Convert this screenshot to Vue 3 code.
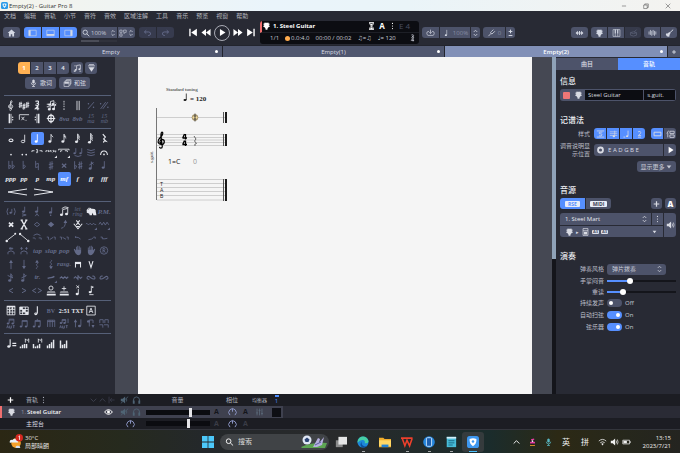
<script setup>
import { h, ref } from 'vue'

const n1 = (v) => Math.round(v * 100) / 100
const head = (x, y, rx = 1.8, ry = 1.4) =>
  `M${n1(x - rx)} ${y}a${rx} ${ry} 0 1 0 ${rx * 2} 0a${rx} ${ry} 0 1 0 ${-rx * 2} 0z`
const ring = (x, y, r) => head(x, y, r, r)
const note = (x, y, top, flags = 0) => {
  let s = `M${x + 1.4} ${y}V${top}`
  for (let i = 0; i < flags; i++) s += `M${x + 1.4} ${top + i * 1.8}q.3 1.6 2.6 3.2`
  return { s, f: head(x, y) }
}
const beam = (a, b, y, top) => ({
  s: `M${a + 1.4} ${y}V${top}H${b + 1.4}V${y}M${a + 1.4} ${top + 1}H${b + 1.4}`,
  f: head(a, y, 1.5, 1.2) + head(b, y, 1.5, 1.2),
})
const add = (base, s = '', f = '') => ({ s: (base.s || '') + s, f: (base.f || '') + f })
const corner = 'M14 10v3h-3z'
const bars = (hs) => hs.map((v, i) => `M${2 + i * 2.4} 12v${-v}h1.7v${v}z`).join('')

const icons = {
  clef: { s: 'M7 9.6C4.2 9.4 4.6 6 7.2 5.6C9.8 6 9.6 9.8 6.8 10C3.2 9.8 3.4 6.4 6.4 4.6C8.6 3 8.4.8 7.4.8C5.8 1.4 6.4 4 7.4 11.2C7.4 12.8 5.2 12.6 5.4 11.4' },
  sharps: { s: 'M2 2.5v7M3.6 2v7M.8 5l4-1M.8 7.5l4-1M6.2 4.5v7M7.8 4v7M5 7l4-1M5 9.5l4-1M10.2 2.5v7M11.8 2v7M9.2 5l4-1M9.2 7.5l4-1' },
  time: { s: 'M5.2 1.6q4-1 3.6 1T6.6 4q2.8.2 2.3 1.6T5 6M8 12V7L5 10.4h4.6', w: 1.3 },
  swing: { s: 'M2 5h3M2 8h3M6.4 5V1.8l4-1V4.6M6 11V7l5-1v4.5M12 3l1 1', f: head(5.4, 5.4) + head(9.4, 4.8) + head(5, 11) + head(10, 10.6) + head(12.2, 5.8, 1, 1) },
  dashed: { s: 'M7 1v2M7 4v1.6M7 6.8v1.6M7 9.8v2' },
  double: { s: 'M5.8 1v11M8.4 1v11' },
  simile: { s: 'M3.5 10.5l7-8', f: ring(4, 4.4, 0.9) + ring(10, 8.6, 0.9) },
  simile2: { s: 'M3 10.5l6-8M5.6 10.5l6-8', f: ring(3, 4.4, 0.9) + ring(11.6, 8.6, 0.9) },
  repStart: { s: 'M7 1v11', f: `M4.2 1h1.7v11h-1.7z${ring(9, 5, 0.8)}${ring(9, 8, 0.8)}` },
  repEnd: { s: 'M7 1v11', f: `M8.2 1h1.7v11h-1.7z${ring(5, 5, 0.8)}${ring(5, 8, 0.8)}` },
  ending: { s: 'M1.500 8V2H13M4 4.500l3.400 4M7.400 4.500l-3.400 4', f: ring(9.4, 8.6, 0.6) },
  coda: { s: `${head(7, 6.5, 3.4, 4)}M7 .8v11.4M2 6.5h10`, w: 1.4 },
  whole: { s: head(7, 8.6, 2.4, 1.6), w: 1.2 },
  half: { s: `${head(5.8, 10, 2, 1.5)}M7.8 10V2` },
  quarter: note(6, 10, 1.4),
  eighth: note(5.6, 10, 1.6, 1),
  n16: note(5.6, 10, 1.4, 2),
  n32: note(5.2, 10.4, 1, 3),
  n64: note(5.2, 11, 0.4, 4),
  rest: { s: 'M5.6 1.4l3 3.4-2 2.2 2.6 2.6q-3-.8-2.6 1.8', w: 1.4 },
  dot: { f: ring(7, 9, 1) },
  dots: { f: ring(5, 9, 1) + ring(9.6, 9, 1) },
  triplet: { s: 'M1 6V4.4h3M10 4.4h3V6M6 3q2-.4 1.8.8T6.6 5q1.8.2 1.3 1.2T6 6.6' },
  tuplet: { s: 'M1 6V4.4h2M4 6V4l1.5 1L7 4v2M8.6 4v.4M8.6 6v.4M10 6V4l2.6 2V4', f: corner },
  tupletBeam: { s: 'M.6 4V2.6H13V4M3 6V4.4h2M8 4.4h3V6', f: corner },
  tied: { s: 'M4.4 7V1.4M11.4 7V1.4M3 10q4 2.4 8 0', f: head(3, 7.4, 1.5, 1.2) + head(10, 7.4, 1.5, 1.2) },
  waves: { s: 'M2.5 3q4.5 2.5 9 0M2.5 6q4.5 2.5 9 0M2.5 9q4.5 2.5 9 0' },
  fermata: { s: 'M3 9.6C3 3 11 3 11 9.6', f: ring(7, 8.8, 1), w: 1.2 },
  flat2: { s: 'M4.4 1v9.4q3-2 2.6-3.4T4.4 7M8.4 1v9.4q3-2 2.6-3.4T8.4 7' },
  flat: { s: 'M6 1v9.4q3-2 2.6-3.4T6 7' },
  natural: { s: 'M5.4 1v8l3.2-1M8.6 12V4L5.4 5' },
  sharp: { s: 'M6 2v9.6M8.2 1.4v9.6M4.4 5.4l5.2-1.2M4.4 9l5.2-1.2' },
  dsharp: { s: 'M4.6 4.4l5 4.6M9.6 4.4l-5 4.6', w: 1.5 },
  flatsharp: { s: 'M3 1.4v9.2q2.8-2 2.4-3.4T3 7.4M8.6 2v9M10.8 1.6v9M7.2 5.4l5-1.2M7.2 8.6l5-1.2' },
  graceUp: add(note(6, 10, 2, 1), 'M5 6l5-3'),
  graceDown: note(6, 9, 1.4, 0),
  ghost: add({ s: 'M8 8V3.4', f: head(6.6, 8, 1.5, 1.2) }, 'M3.4 2.6q-2.4 4 0 8M10.8 2.6q2.4 4 0 8'),
  accent: add(note(6.4, 6.6, 0.8), 'M4.6 9.2l5 1.4-5 1.4'),
  heavy: add(note(6.4, 6.6, 0.8), 'M5 12l2-3 2 3'),
  stacc: add(note(6.4, 7.6, 1.6), '', ring(6.6, 11, 0.9)),
  slurNotes: { s: 'M5.4 10V4.2l6-1.4V9M4.4 3Q8-.4 12.4 2', f: head(4, 10.4) + head(10, 9.4) },
  handNote: { s: 'M2 5q2-4 5-2M6 4l6 1M4 5l1 4', f: 'M2 5l4-2 5 .6q2 1 1.6 3l.8 4.4H10L8.6 8 8 11H5.4l-.6-2L2 8z' },
  dead: { s: 'M4.6 4.2l5 4.8M9.6 4.2l-5 4.8', w: 2 },
  bigX: { s: 'M4 1.4l6 10.2M10 1.4L4 11.6M3 1.4h2.6M3 11.6h2.6M8.4 1.4H11M8.4 11.6H11', w: 1.5 },
  diamond: { s: 'M7 4l3.2 2.5L7 9 3.8 6.5z' },
  diamondF: { f: 'M7 3.2l3.8 3.3L7 9.8 3.2 6.5z' },
  bend: { s: 'M3.6 11q5.4-1 5-8', f: 'M6.4 4.6L8.8 1l2 3.8z' },
  whammy: { s: 'M2 5.6l5 6 5-6M5 1.6l4 5.4M9 1.6L5 7M5.4 9h3', w: 1.2 },
  vib: { s: 'M1 6q1-2 2 0t2 0 2 0 2 0 2 0 2 0', f: corner },
  vibWide: { s: 'M1 6.4l1.6-2.6 2 3.4 2-3.4 2 3.4 2-3.4 2 3', f: corner },
  slideUp: { s: 'M3 9.4L11.4 3', f: ring(2, 10.6, 1.5) + ring(12, 2, 1.2) },
  slideDown: { s: 'M3 3l8.4 7', f: ring(2.4, 2.4, 1.4) + ring(12, 10.6, 1.5) },
  hammer: { s: 'M3 4q4-3.4 8 0M2 7h2q1 0 1 1.6M9 7h3v2' },
  sl1: { s: 'M2 6h2v3M5.4 9l4-2.6M10 6h2v3' },
  sl2: { s: 'M2 6h2v3M5.4 6.4l4 2.2M10 6h2v3' },
  sl3: { s: 'M4 6q4 0 6 2.4M4 5v2' },
  sl4: { s: 'M4 9q4 0 6-2.4M10 6h2v2' },
  sl5: { s: 'M3 6h2v2q3 .4 6-.6' },
  arcTr: { s: 'M3.4 11V8.4q3.6-3 7.2 0V11M4.6 4h5M6 2.4v3.4M8 3v2.6' },
  arcTrP: { s: 'M3.4 11V8.4q3.6-3 7.2 0V11M2.6 4h3M8.4 4h3M4 2.4v3.4M10 2.4v3.4' },
  palm: { f: 'M3 7.6L2 5l1-.5L4.6 6.6V2h1v3.6h.6V.9h1.1v4.7H8V1.4h1v4.4h.7V3h1v6q-.3 3-3.2 3Q5 12 3 7.6z' },
  palm2: { f: 'M11 7.6L12 5l-1-.5L9.4 6.6V2h-1v3.6h-.6V.9H6.7v4.7H6V1.4H5v4.4h-.7V3h-1v6q.3 3 3.2 3Q9 12 11 7.6z' },
  regd: { s: `${ring(7, 6.5, 4.4)}M5.8 9V4h1.6q1.4 1.2 0 2.6H5.8M7 6.6L8.6 9` },
  up: { s: 'M7 12V2.4', f: 'M4.8 4.6L7 .8l2.2 3.8z' },
  down: { s: 'M7 1v9.6', f: 'M4.8 8.4L7 12.2l2.2-3.8z' },
  upW: { s: 'M7 12q-1.6-1 0-2t0-2 0-2 0-2', f: 'M4.8 4.4L7 .8l2.2 3.6z' },
  downW: { s: 'M7 1q1.6 1 0 2t0 2 0 2 0 2', f: 'M4.8 8.6L7 12.2l2.2-3.6z' },
  pickDown: { s: 'M4 10V5h6v5', f: 'M3.4 3.4h7.2v2.6H3.4z', w: 1.2 },
  pickUp: { s: 'M4.6 2.6L7 10l2.4-7.4', w: 1.3 },
  gr1: add(note(5.4, 10, 2, 2), 'M3 4l6 3'),
  gr2: add(note(5.4, 10, 2, 1), 'M4 7l6-3'),
  turnA: { s: 'M3 7.6q2-1 4-1t4-1.4', f: corner, w: 1.6 },
  mord: { s: 'M2 7.6l2-2 2 2 2-2 2 2 2-2', w: 1.3 },
  mordP: { s: 'M2 7.6l2-2 2 2 2-2 2 2 2-2M7 3.4v6.4', w: 1.2 },
  turn: { s: 'M5 8.4C1 9.6 2 4 4.6 5.4S9 9 11 8.2 10.6 4 8.6 5', w: 1.2 },
  turn2: { s: 'M9 8.4C13 9.6 12 4 9.4 5.4S5 9 3 8.2 3.4 4 5.4 5', w: 1.2 },
  lt: { s: 'M9.4 4L4.6 6.6l4.8 2.6', w: 1.1 },
  gt: { s: 'M4.6 4l4.8 2.6-4.8 2.6', w: 1.1 },
  ltgt: { s: 'M6 4L1.6 6.6 6 9.2M8 4l4.4 2.6L8 9.2', w: 1.1 },
  wahO: { s: ring(7, 3.6, 2.4), f: 'M3 7.8h8.4l1 1.2H2zM2 10.4h10.6v2H2z' },
  wahP: { s: 'M4.4 4.2h5.2M7 1.6v5', f: 'M3 7.8h8.4l1 1.2H2zM2 10.4h10.6v2H2z' },
  noteX: add(note(6, 10.6, 4.6), 'M5 .6l3.4 3M8.4.6L5 3.6'),
  noteDot: add(note(6, 8.4, 1), 'M5 11.4h5', ring(9, 2.4, 1)),
  chordGrid: { s: 'M2.4 2h9.2v9.6H2.4zM5.4 2v9.6M8.6 2v9.6M2.4 5.2h9.2M2.4 8.4h9.2', f: 'M2 1h10v1.8H2z' + ring(5.4, 6.8, 1) + ring(8.6, 4, 1) },
  grid: { s: 'M2 2.4h10v8.8H2zM5.3 2.4v8.8M8.6 2.4v8.8M2 5.4h10M2 8.4h10', f: 'M2 2.4h3v3H2zM9 8.4h3v3H9zM5.4 5.4h3v3h-3z' },
  slash: { s: `${head(5.6, 10.4, 1.2, 1)}M7.4 10V1.6`, w: 1.3 },
  boxA: { s: 'M2 1.4h10v10.4H2zM4.8 9.4L7 3.6l2.2 5.8M5.6 7.6h2.8' },
  autoBeam: add(beam(3.4, 9, 6.4, 1.4), 'M2 12l1-3 1 3M5.4 9v3h2V9M9 9h2.4M10.2 9v3'),
  beamA: beam(3.4, 9.4, 10, 3),
  beamB: add(beam(3.4, 9.4, 10, 3), 'M7.4 1v2'),
  beamC: { s: 'M3 10.6V2.6h8.4v8M5.8 2.6v8M8.6 2.6v8M3 4.2h8.4' },
  autoStem: add(beam(3.4, 7.6, 6, 1.8), 'M11.8 6V.8M2 12l1-3 1 3M5.4 9v3h2V9M9 9h2.4M10.2 9v3'),
  stemUp: { s: 'M4 11V4M10.4 9V1.6', f: 'M2 5l2-3.6L6 5z' + head(8.8, 9.4) },
  stemDn: { s: 'M5 10V2.4h4.4V6', f: head(4, 4) + 'M7.6 8.4l1.8 3.4 1.8-3.4z' },
  brackets: { s: 'M2 6V2h4v4M8 6V2h4v4M1.6 8h4v3.4M7 8h5v3.4' },
  tempo: { s: 'M6 10V1.6M8.6 6.4h4.6M8.6 9h4.6', f: head(4.4, 10), w: 1.3 },
  volM: { s: 'M8.6 5.4V1l2 2 2-2v4.4', f: bars([2, 4, 5, 5]) },
  panM: { s: 'M8.6 5.4V1l2 2 2-2v4.4', f: bars([5, 2, 3, 5]) },
  vol: { f: bars([3, 5, 7, 10]) },
  pan: { f: bars([9, 4, 5, 9]) },
  home: { f: 'M7 .8L.8 6.6h2v5.6h3V8.4h2.4v3.8h3V6.6h2z' },
  layL: { s: 'M1 2h12v9H1z', f: 'M1 2h3v9H1z' },
  layB: { s: 'M1 2h12v9H1z', f: 'M1 8h12v3H1z' },
  layR: { s: 'M1 2h12v9H1z', f: 'M10 2h3v9h-3z' },
  search: { s: `${ring(5.6, 5.2, 3.8)}M8.4 8l4.4 4.2`, w: 1.5 },
  pages: { s: 'M1.4 1.4h4v4h-4zM8 1.4h4.6v4H8zM1.4 8h4v4h-4zM8 7.4h2' },
  updown: { s: 'M4.2 4.8L7 2l2.8 2.8M4.2 8.2L7 11l2.8-2.8', w: 1.3 },
  undo: { s: 'M5 2L2 4.8 5 7.6M2 4.8h7q3.4.4 3 3.2T8 10.6', w: 1.5 },
  redo: { s: 'M9 2l3 2.8-3 2.8M12 4.8H5Q1.6 5.2 2 8t4 2.6', w: 1.5 },
  first: { f: 'M1.6 1h2v11h-2zM12.6 1v11L4.4 6.5z' },
  last: { f: 'M10.4 1h2v11h-2zM1.4 1v11l8.2-5.5z' },
  rew: { f: 'M7 1.6v9.8L.4 6.5zM13.6 1.6v9.8L7 6.5z' },
  fwd: { f: 'M7 1.6v9.8l6.6-4.9zM.4 1.6v9.8L7 6.5z' },
  play: { f: 'M4 1.4v10.2l8-5.1z' },
  guitar: { f: 'M4 .8q3 1 6 0l.6 1.6 1.6.4v1.4l-1.4.4v1.2l1.4.4v1.4l-1.4.4L9 9.6 8.4 12.6H5.6L5 9.6 3.2 8l-1.4-.4V6.2l1.4-.4V4.6l-1.4-.4V2.8l1.6-.4z' },
  metro: { s: 'M3 1h8M3 12h8M4 1.6q0 3 3 5-3 2-3 5M10 1.6q0 3-3 5 3 2 3 5', w: 1.5, f: 'M4.6 3h4.8L7 6zM4.6 11.4h4.8L7 8z' },
  kebab: { f: ring(7, 2.4, 1) + ring(7, 6.5, 1) + ring(7, 10.6, 1) },
  loop: { s: 'M4.6 4H3Q1 4.4 1 7t2 3.4h8Q13 10 13 7t-2-3h-1.6M7 1v6M5 5.2L7 7.4l2-2.2', w: 1.1 },
  fork: { s: 'M2 11.6L6 7.4M6 7.4Q4.6 5.6 7 4l3-3M6 7.4Q7.8 9 9.6 6.6l3-3', w: 1.3 },
  plusminus: { s: 'M4 4h6M7 1v6M4 10.6h6', w: 1.6 },
  tuner: { f: 'M.6 6.5L4.4 3v7zM13.4 6.5L9.6 3v7zM4.4 5.6h5.2v1.8H4.4zM6.2 3.4h1.6v6.2H6.2z' },
  piano: { s: 'M1.4 1h11.2v11H1.4zM5 7v5M9 7v5', f: 'M4 1h2v6.4H4zM8 1h2v6.4H8z' },
  drum: { s: 'M2 6v4q5 3 10 0V6M2 6q5 3 10 0M2 6q5-3 10 0M8 5l4-4', w: 1.2 },
  wave: { s: 'M1.4 4v5M3.6 1.5v8M5.8 3v8M8 1.5v8M10.2 3v8M12.4 4v5', w: 1.2 },
  strat: { s: 'M6 7.6L13 1', f: 'M1 9q1-3 3-1.6L6.6 5l2 2-1.6 2.6q1 3-2 3T1 9z', w: 1.6 },
  mic: { s: 'M3.4 6q0 3.6 3.6 3.6T10.6 6M7 9.6V12M4.6 12.2h4.8', f: 'M5 2.4q2-2.8 4 0V6Q7 9 5 6z', w: 1.2 },
  cards: { s: 'M1.4 4.6h8v7.6h-8zM3.4 4.6V2.6h8v7.6h-2M5.4 2.6V1h7.2v7h-1.2', f: 'M2 5h7v2.6H2z' },
  swap: { s: 'M5.6 9V2.4l6-1V8M2 3h2M10 11.6h3', f: head(4.2, 9.4) + head(10.2, 8.4) + 'M1 10.6h3v2H1z', w: 1.3 },
  drop: { s: 'M1.4 3h11.2M3 1h8', f: 'M2 5.4h10L7 12.4z', w: 1.3 },
  plus: { s: 'M7 2v9M2.5 6.5h9', w: 2 },
  target: { s: ring(7, 6.5, 4), w: 3 },
  caret: { f: 'M3 4h8L7 9z' },
  speaker: { s: 'M9.6 4q1.4 2.5 0 5M11.6 2.4q2.4 4 0 8.2', f: 'M1 4.6h3L8 1v11L4 8.4H1z', w: 1.2 },
  amp: { s: 'M3 1h8v11H3zM3 4.4h8', f: 'M4.4 6h5.2v4.6H4.4z', w: 1.2 },
  eye: { s: 'M.6 6.5Q7-1 13.4 6.5 7 14 .6 6.5z', f: ring(7, 6.5, 2.4), w: 1.6 },
  mute: { s: 'M10 4q1.4 2.5 0 5M1 12L13 1', f: 'M1 4.6h3L8 1v11L4 8.4H1z', w: 1.2 },
  phones: { s: 'M2 9V6.5q.4-5 5-5t5 5V9', f: 'M1 7.4h3v5H1zM10 7.4h3v5h-3z', w: 1.4 },
  knob: { s: 'M3 11.6A6 6 0 1 1 11 11.6M7 1v5', w: 1.6 },
  eq: { s: 'M3 1v11M7 1v11M11 1v11M1.6 8h3M5.6 4h3M9.6 9h3', w: 1.3 },
  chevD: { s: 'M2.4 4.4L7 9l4.6-4.6', w: 1.6 },
  chevU: { s: 'M2.4 9L7 4.4 11.6 9', w: 1.6 },
  mixIn: { s: 'M3 1v11M5 6.5h7M7.4 3.5L5 6.5l2.4 3', w: 1.3 },
  std: { s: 'M1 1.5h12M1 11.5h12M10 3.500H5V6q5-.5 4.500 2T4.500 9.500', w: 1.2 },
  stdNote: { s: 'M1 3h12M1 6h12M1 9h12M9 9V1', f: head(7.6, 10, 2, 1.6), w: 1 },
  slashNote: { s: 'M9.500 1v9M2 11.500h3', w: 1.3, f: head(8, 10, 1.8, 1.4) },
  jianpu: { s: 'M4.6 3q4.6-2 4.4 1T5 9h4.6M4.6 11.6h5', w: 1.2 },
  rect: { s: 'M1.4 3.6h11.2v5.8H1.4z', w: 1.5 },
  stack: { s: 'M4 1L1 5.6M2.6 4.6V12M6 2h7v3.6H6zM6 8h7v4H6z', w: 1.3 },
  wifi: { s: 'M1 5q6-5.4 12 0M3.4 7.6q3.6-3 7.2 0', f: 'M5 9.4q2-1.4 4 0L7 12z', w: 1.3 },
  battery: { s: 'M1 3.6h11v6H1zM13.4 5.4v2.4', f: 'M2 4.6h5.6v4H2z', w: 1.2 },
  minus: { s: 'M2.5 6.5h9' },
  restore: { s: 'M2 4.4h7.6V12H2zM4.4 4.4V2H12v7.6H9.6' },
  close: { s: 'M2 1.5l10 10M12 1.5l-10 10' },
}

const Glyph = (p) => {
  const i = icons[p.n]
  return h('svg', { viewBox: '0 0 14 13', 'aria-hidden': 'true' }, [
    i.s ? h('path', { d: i.s, fill: 'none', stroke: 'currentColor', 'stroke-width': i.w || 1 }) : null,
    i.f ? h('path', { d: i.f, fill: 'currentColor' }) : null,
  ])
}
Glyph.props = ['n']

/* "*" marks an available symbol, "#" the selected one, "=" a lettered one */
const parse = (rows) =>
  rows.flatMap((r) => r.split(' ')).map((k) => {
    const on = /^[*#]/.test(k)
    const sel = k[0] === '#'
    const key = k.replace(/^[*#]/, '')
    const text = key[0] === '='
    return { on, sel, text, key: text ? key.slice(1).replace('_', '\n') : key }
  })
const palettes = [
  { id: 'bars', cells: parse(['*clef *sharps *time *swing *dashed *double simile simile2', '*repStart *ending *repEnd *coda =8va =8vb =15_ma =15_mb']) },
  { id: 'notes', cells: parse([
    '*whole *half #quarter *eighth *n16 *n32 *n64 *rest',
    '*dot *dots *triplet *tuplet *tupletBeam tied waves *fermata',
    'flat2 flat natural sharp dsharp flatsharp graceUp graceDown',
    '*=ppp *=pp *=p *=mp #=mf *=f *=ff *=fff']), hairpins: true },
  { id: 'effects', cells: parse([
    'ghost accent heavy stacc *slurNotes =let_ring *handNote =P.M.',
    '*dead *bigX diamond diamondF bend *whammy vib vibWide',
    '*slideUp *slideDown hammer sl1 sl2 sl3 sl4 sl5',
    'arcTr arcTrP =tap =slap =pop palm palm2 regd',
    'up down upW downW =rasg. *pickDown *pickUp =',
    'gr1 gr2 =tr. turnA mord mordP turn turn2',
    'lt gt ltgt *wahO *wahP *noteX *noteDot =']) },
  { id: 'marks', cells: parse(['*chordGrid *grid *slash =BV *=2:51 *=TXT *boxA =', 'autoBeam beamA beamB beamC autoStem stemUp stemDn brackets']) },
  { id: 'autom', cells: parse(['*tempo *volM *panM *vol *pan']) },
]

const menus = ['文档', '编辑', '音轨', '小节', '音符', '音效', '区域注解', '工具', '音乐', '预览', '视窗', '帮助']
const docs = ['Empty', 'Empty(1)', 'Empty(2)']
const palm = ref(32)
const stress = ref(21)
const toggles = ref([
  { label: '持续发声', on: false },
  { label: '自动扫弦', on: true },
  { label: '弦乐器', on: true },
])
const trackVol = ref(72)
const masterVol = ref(68)
const title = ref('Steel Guitar')
const short = ref('s.guit.')
</script>

<template>
  <div class="window">
    <header class="titlebar">
      <svg class="logo" viewBox="0 0 14 14"><rect width="14" height="14" rx="3" fill="#2b9be8" /><path d="M3 3.500q4-1.500 8 0Q11.500 9 7 12 2.500 9 3 3.500z" fill="#fff" /><circle cx="7" cy="6.500" r="1.800" fill="#2b9be8" /></svg>
      <span>Empty(2) - Guitar Pro 8</span>
      <div class="wincontrols">
        <button aria-label="Minimize"><Glyph n="minus" /></button>
        <button aria-label="Restore"><Glyph n="restore" /></button>
        <button aria-label="Close"><Glyph n="close" /></button>
      </div>
    </header>

    <nav class="menubar"><a v-for="m in menus" :key="m" href="#">{{ m }}</a></nav>

    <div class="toolbar">
      <div class="left-tools">
        <button class="tool" aria-label="Home"><Glyph n="home" /></button>
        <div class="group blue">
          <button aria-label="Palette"><Glyph n="layL" /></button>
          <button aria-label="Mixer"><Glyph n="layB" /></button>
          <button aria-label="Inspector"><Glyph n="layR" /></button>
        </div>
        <div class="zoomwrap">
          <div class="group">
            <label class="zoom"><Glyph n="search" /><select aria-label="Zoom"><option>100%</option></select><Glyph n="updown" /></label>
            <button class="pages" aria-label="Layout"><Glyph n="pages" /><Glyph n="updown" /></button>
          </div>
          <div class="scroll"><i></i></div>
        </div>
        <div class="group off">
          <button aria-label="Undo"><Glyph n="undo" /></button>
          <button aria-label="Redo"><Glyph n="redo" /></button>
        </div>
      </div>
      <div class="transport">
        <button aria-label="First"><Glyph n="first" /></button>
        <button aria-label="Rewind"><Glyph n="rew" /></button>
        <button class="play" aria-label="Play"><Glyph n="play" /></button>
        <button aria-label="Forward"><Glyph n="fwd" /></button>
        <button aria-label="Last"><Glyph n="last" /></button>
      </div>
      <section class="lcd">
        <div class="lcd-top">
          <Glyph n="guitar" /><strong>1. Steel Guitar</strong>
          <Glyph class="push" n="metro" /><b class="bigA">A</b><Glyph n="kebab" /><span class="chord">E 4</span>
        </div>
        <div class="lcd-bottom">
          <span>1/1</span>
          <span class="beat"><i></i>0.0:4.0</span>
          <span class="clock">00:00 / 00:02</span>
          <span class="sym">♫=♫</span>
          <span class="bpm">♩= 120</span>
          <Glyph n="time" />
        </div>
      </section>
      <div class="mid-tools">
        <div class="group">
          <button aria-label="Loop"><Glyph n="loop" /></button>
          <button class="speed"><Glyph n="quarter" /><span>100%</span></button>
          <button class="narrow" aria-label="Speed step"><Glyph n="updown" /></button>
        </div>
        <div class="group">
          <button class="tune"><Glyph n="fork" /><span>0</span></button>
          <button class="narrow" aria-label="Tone step"><Glyph n="plusminus" /></button>
        </div>
      </div>
      <div class="right-tools">
        <button class="tool" aria-label="Tuner"><Glyph n="tuner" /></button>
        <div class="group">
          <button aria-label="Fretboard"><Glyph n="guitar" /></button>
          <button aria-label="Keyboard"><Glyph n="piano" /></button>
          <button class="disabled" aria-label="Drums"><Glyph n="drum" /></button>
        </div>
        <div class="group">
          <button aria-label="Virtual"><Glyph n="wave" /></button>
          <button aria-label="Line in"><Glyph n="strat" /></button>
        </div>
      </div>
    </div>

    <nav class="doctabs">
      <button v-for="(d, i) in docs" :key="d" :class="{ active: i === 2 }"><span>{{ d }}</span><i></i></button>
      <button class="add" aria-label="New"><Glyph n="plus" /></button>
    </nav>

    <main class="work">
      <aside class="palette">
        <div class="voices">
          <div class="group voice"><button v-for="v in 4" :key="v" :class="{ current: v === 1 }">{{ v }}</button></div>
          <button class="tool" aria-label="Multivoice"><Glyph n="swap" /></button>
          <button class="tool" aria-label="Design"><Glyph n="drop" /></button>
        </div>
        <div class="words">
          <button class="tool"><Glyph n="mic" />歌词</button>
          <button class="tool"><Glyph n="cards" />和弦</button>
        </div>
        <section v-for="p in palettes" :key="p.id" :class="['symbols', p.id]">
          <button v-for="(c, i) in p.cells" :key="i" :class="{ on: c.on, sel: c.sel, stacked: c.key.includes('\n') }" :aria-label="c.key">
            <span v-if="c.text">{{ c.key }}</span><Glyph v-else :n="c.key" />
          </button>
          <template v-if="p.hairpins">
            <button class="on hair" aria-label="Crescendo"><svg viewBox="0 0 20 8"><path d="M20 1L1 4l19 3" /></svg></button>
            <button class="on hair" aria-label="Decrescendo"><svg viewBox="0 0 20 8"><path d="M0 1l19 3L0 7" /></svg></button>
          </template>
        </section>
      </aside>

      <div class="canvas">
        <article class="sheet">
          <svg class="score" viewBox="0 0 110 130" aria-label="Score">
            <g class="serif" fill="#222">
              <text x="28" y="9" font-size="5">Standard tuning</text>
              <text x="52" y="19" font-size="7" font-weight="bold">= 120</text>
              <text x="0" y="0" font-size="5" transform="translate(15 81) rotate(-90)">s.guit.</text>
            </g>
            <path d="M48.300 18v-6.500" stroke="#222" stroke-width=".8" /><ellipse cx="47" cy="18" rx="1.500" ry="1.100" fill="#111" />
            <g fill="none" stroke="#c4c4c4" stroke-width=".8">
              <path d="M19 35.500h69M19 52.500h69M19 55.500h69M19 58h69M19 60.500h69M19 63.500h69" />
              <path d="M19 97.500h69M19 101.500h69M19 105.500h69M19 109.500h69M19 113.500h69M19 118h69" />
            </g>
            <path d="M18.500 26v92" stroke="#555" stroke-width=".8" />
            <path d="M85.500 30v11M85.500 52v12M85.500 97v22" stroke="#444" stroke-width=".9" />
            <path d="M88 30v11M88 52v12M88 97v22" stroke="#050505" stroke-width="1.800" />
            <circle cx="57" cy="35.500" r="2.900" fill="#f6dfa0" stroke="#94825a" stroke-width=".8" /><path d="M57 31.500v8M55.500 34h3M55.500 37h3" stroke="#333" stroke-width=".8" />
            <path d="M24 61.500c-3-.5-2.500-4 .3-4.200 3 .5 2.500 5.200-.8 5.200-4.500-.3-4.200-4.500-1-7.300 2.700-2.200 2.700-5.200 1.500-5.200-1.800.8-1.200 4 .3 14.500 0 2.200-3 2-2.700.3" fill="none" stroke="#000" stroke-width="1.200" />
            <path d="M47.500 52v5.500M44.500 56h4.500M46.500 52L44.700 56M47.500 58.500v5.500M44.500 62.500h4.500M46.500 58.500l-1.800 4" fill="none" stroke="#000" stroke-width="1.300" />
            <path d="M56 54l2 3-1.500 2 2 2.500q-2.500 0-1.500 2.500" fill="none" stroke="#666" stroke-width="1" />
            <g class="sans">
              <text x="30" y="82" font-size="7" fill="#222">1=C</text><text x="55" y="82" font-size="7" fill="#999">0</text>
            </g>
            <g class="tab" fill="#222" font-size="5">
              <text x="22" y="104">T</text><text x="22" y="110">A</text><text x="22" y="116">B</text>
            </g>
          </svg>
        </article>
      </div>

      <div class="vscroll"><i></i></div>

      <aside class="inspector">
        <div class="insp-tabs"><button>曲目</button><button class="active">音轨</button></div>
        <h2>信息</h2>
        <div class="info">
          <button aria-label="Colour"><i class="swatch"></i></button>
          <button aria-label="Instrument"><Glyph n="guitar" /></button>
          <input v-model="title" aria-label="Track name" /><input v-model="short" aria-label="Short name" />
        </div>
        <h2 class="second">记谱法</h2>
        <div class="field"><span class="lbl">样式</span>
          <div class="group blue"><button v-for="g in ['std', 'stdNote', 'slashNote', 'jianpu']" :key="g" :aria-label="g"><Glyph :n="g" /></button></div>
          <div class="group staffkind"><button class="active" aria-label="Single"><Glyph n="rect" /></button><button aria-label="Multi"><Glyph n="stack" /></button></div>
        </div>
        <div class="field tuning"><span class="lbl">调音说明显示位置</span>
          <div class="group"><button class="strings"><Glyph n="target" />E A D G B E</button><button class="go" aria-label="Listen"><Glyph n="play" /></button></div>
        </div>
        <button class="tool more">显示更多<Glyph n="caret" /></button>
        <h2 class="sound">音源</h2>
        <div class="source">
          <div class="group"><button class="active"><b>RSE</b></button><button><b class="midi">MIDI</b></button></div>
          <button class="tool" aria-label="Add sound"><Glyph n="plus" /></button>
          <button class="tool auto">A</button>
        </div>
        <div class="bank">
          <div class="bank-name"><select aria-label="Sound"><option>1. Steel Mart</option></select><Glyph n="updown" /><button aria-label="Sound menu"><Glyph n="kebab" /></button></div>
          <button class="bank-listen" aria-label="Preview sound"><Glyph n="speaker" /></button>
          <div class="bank-chain"><Glyph n="guitar" /><em>▸</em><Glyph n="amp" /><b>A3</b><b>A3</b><Glyph class="last" n="caret" /></div>
        </div>
        <h2 class="perf">演奏</h2>
        <div class="prow"><label for="style">弹奏风格</label><span class="pick"><select id="style"><option>弹片拨奏</option></select><Glyph n="updown" /></span></div>
        <div class="prow slim"><label for="palm">手掌闷音</label><input id="palm" v-model="palm" class="range" type="range" :style="{ '--v': palm + '%' }" /></div>
        <div class="prow slim"><label for="stress">重读</label><input id="stress" v-model="stress" class="range" type="range" :style="{ '--v': stress + '%' }" /></div>
        <div v-for="(t, i) in toggles" :key="i" class="prow"><label :for="'t' + i">{{ t.label }}</label><input :id="'t' + i" v-model="t.on" class="switch" type="checkbox" /><span>{{ t.on ? 'On' : 'Off' }}</span></div>
      </aside>
    </main>

    <section class="mixer">
      <div class="mrow mhead">
        <button aria-label="Add track"><Glyph n="plus" /></button>
        <span class="mname">音轨<Glyph n="kebab" /><span class="fold"><Glyph n="chevD" /><Glyph n="chevU" /><Glyph n="mixIn" /></span></span>
        <span class="ms"><Glyph n="mute" /><Glyph n="phones" /></span>
        <span>音量</span><span></span><span class="pan">相位</span><span></span><span class="eqh">均衡器</span>
        <span class="marker">1</span>
      </div>
      <div class="mrow track">
        <Glyph n="guitar" />
        <span class="mname"><span class="num">1.</span> Steel Guitar<Glyph class="eye" n="eye" /></span>
        <span class="ms"><Glyph n="mute" /><Glyph n="phones" /></span>
        <input v-model="trackVol" class="fader" type="range" aria-label="Track volume" />
        <b>A</b><Glyph class="knob" n="knob" /><b>A</b><Glyph class="eq" n="eq" /><span class="block"></span><span class="timeline"></span>
      </div>
      <div class="mrow master">
        <span></span><span class="mname">主控台</span><span class="ms"><Glyph class="knob" n="knob" /></span>
        <input v-model="masterVol" class="fader" type="range" aria-label="Master volume" />
        <b>A</b><Glyph class="knob" n="knob" /><b>A</b>
      </div>
    </section>

    <footer class="taskbar">
      <div class="weather">
        <svg viewBox="0 0 28 28"><circle cx="15" cy="17" r="9" fill="#f5a02c" /><path d="M3 15q0-5 6-4 3-4 7 0 4 1 3 5H6q-3 1-3-1z" fill="#e9f1fb" /><path d="M14 25q0-4 5-3 4 0 4 4H16z" fill="#cfe0f5" /><circle cx="21" cy="7" r="7" fill="#d4281f" /><path d="M19.500 5l2-1.500V11" fill="none" stroke="#fff" stroke-width="1.400" /></svg>
        <span>30°C<br />局部晴朗</span>
      </div>
      <div class="apps">
        <button class="start" aria-label="Start"><svg viewBox="0 0 12 12"><path d="M0 0h5.600v5.600H0zM6.400 0H12v5.600H6.400zM0 6.400h5.600V12H0zM6.400 6.400H12V12H6.400z" fill="#4cc8fa" /></svg></button>
        <label class="find"><Glyph n="search" /><input placeholder="搜索" aria-label="搜索" />
          <svg class="art" viewBox="0 0 28 14"><path d="M1 12q12-5 26-4l-2 5H2z" fill="#5da552" /><circle cx="7" cy="5" r="4.500" fill="#dfe6f4" /><path d="M7 2.500l2.500 2-1 2.500h-3l-1-2.500z" fill="#2c4474" /><path d="M13 12l5-9 2 1-1 4 5-6-2 8-5 2z" fill="#b6b0e0" /><path d="M15 10l6-3" stroke="#5c5aa0" /></svg>
        </label>
        <button aria-label="Task view"><svg viewBox="0 0 14 14"><path d="M1 5h8v8H1z" fill="#8b8b8b" /><path d="M4 1h10v9H4z" fill="#e6e6e6" /></svg></button>
        <button class="run" aria-label="Edge"><svg viewBox="0 0 14 14"><circle cx="7" cy="7" r="6.500" fill="#1c87d8" /><path d="M.7 6Q2 .5 7 .5t6.500 5.500Q13 9 9 8.500q1-3.500-2.500-3.700T.7 8z" fill="#46cfa5" /><path d="M5.500 6.500q-1 4 3 5.500 2 .5 4-.8-2 2.500-5.500 2.300Q2 12 5.500 6.500z" fill="#0c4f9e" /></svg></button>
        <button aria-label="Files"><svg viewBox="0 0 14 14"><path d="M0 2h5l1.500 1.500H14V13H0z" fill="#f0ad2c" /><path d="M0 5h14v7H0z" fill="#ffd766" /><path d="M3 10h8v3H3z" fill="#2684d4" /></svg></button>
        <button class="run" aria-label="WPS"><svg viewBox="0 0 14 14"><path d="M0 2.500h13.500M1.500 3l3 8.500L7 5l3 6.500 3-8.500" fill="none" stroke="#ed402c" stroke-width="1.800" /></svg></button>
        <button class="run" aria-label="Phone"><svg viewBox="0 0 14 14"><circle cx="7" cy="7" r="6.800" fill="#2586dd" /><rect x="4" y="2" width="6" height="10" rx="1.300" fill="#1d5fae" stroke="#cfe9ff" /></svg></button>
        <button class="run" aria-label="Notepad"><svg viewBox="0 0 14 14"><path d="M2 1h11v12H2z" fill="#48bcd8" /><path d="M2 1h11v2H2z" fill="#d4eef7" /><path d="M4 5.500h7M4 8h7M4 10.500h5" stroke="#14627f" /></svg></button>
        <button class="run current" aria-label="Guitar Pro"><svg viewBox="0 0 14 14"><rect width="14" height="14" rx="3" fill="#3d97ef" /><path d="M3 3.500q4-1.500 8 0Q11.500 9 7 12 2.500 9 3 3.500z" fill="#fff" /><circle cx="7" cy="6.500" r="1.500" fill="#3d97ef" /></svg></button>
      </div>
      <div class="tray">
        <Glyph n="chevU" />
        <svg viewBox="0 0 14 13"><ellipse cx="7" cy="7" rx="3.500" ry="5.500" fill="#111" /><path d="M4.500 2l5-1 .5 2-5 1zM3 6h8v3H3z" fill="#e83fa5" /><circle cx="7" cy="5" r="1.500" fill="#fff" /><path d="M3 12h8" stroke="#f2a52d" stroke-width="1.500" /></svg>
        <Glyph class="micro" n="mic" />
        <span>英</span><span>拼</span>
        <div class="status"><Glyph n="wifi" /><Glyph n="speaker" /><Glyph n="battery" /></div>
        <time>13:15<br />2023/7/21</time>
      </div>
    </footer>
  </div>
</template>

<style>
body { margin: 0; background: #24262f; }
</style>

<style scoped>
* { box-sizing: border-box; }
.window { display: grid; grid-template-rows: 11px 9px 25px 12px 1fr 35px 24px; height: 100vh; overflow: hidden; background: #282a34; color: #d9dbe3; font: 6px/8px "Open Sans", "Noto Sans CJK SC", sans-serif; }
button, input, select { margin: 0; padding: 0; border: 0; background: none; color: inherit; font: inherit; outline: 0; min-width: 0; }
select { appearance: none; }
a { color: inherit; text-decoration: none; }
button { display: flex; align-items: center; justify-content: center; }
svg { display: block; width: 9px; height: 8px; flex: none; overflow: visible; }

.titlebar { display: flex; align-items: center; gap: 1px; padding-left: 1px; background: linear-gradient(90deg, #f4f4ec, #eaf4fb 40%, #eaf4f8 60%, #f4f3f0); color: #333; }
.titlebar .logo { width: 7px; height: 7px; }
.wincontrols { display: flex; margin-left: auto; padding-right: 8px; gap: 14px; color: #333; }
.wincontrols svg { width: 8px; height: 6px; }

.menubar { display: flex; align-items: center; gap: 8px; padding: 1px 4px 0; color: #b4b6bf; white-space: nowrap; }

.toolbar { display: flex; align-items: center; color: #d5d9e4; }
.left-tools { display: flex; align-items: center; gap: 4px; padding-left: 3px; width: 188px; }
.group { display: flex; gap: 1px; height: 11px; border-radius: 3px; overflow: hidden; }
.group > *, .tool { height: 11px; background: #4d536a; }
.group > button { width: 17px; }
.tool { width: 17px; border-radius: 3px; }
.blue > button, .group > .active { background: #568fff; }
.zoomwrap { height: 11px; }
.zoom { display: flex; align-items: center; width: 36px; gap: 1px; padding-left: 1px; }
.zoom select { width: 17px; color: #c3c7d4; }
.zoom svg, .pages svg { width: 8px; }
.group > .pages { width: 17px; }
.scroll { height: 2px; width: 36px; margin-top: 2px; background: #30323c; }
.scroll i { display: block; width: 18px; height: 2px; background: #4b4d58; }
.off > button { background: #373b4e; color: #666d8b; }
.transport { display: flex; align-items: center; gap: 3px; width: 72px; color: #fff; }
.transport svg { width: 10px; height: 9px; }
.play { width: 16px; height: 16px; border: 1px solid #a9abb4; border-radius: 50%; }
.lcd { width: 159px; height: 23px; margin-top: -1px; overflow: hidden; border-radius: 3px; background: #0c0d12; }
.lcd-top { display: flex; align-items: center; gap: 2px; height: 12px; border-left: 2px solid #ef6f6f; border-bottom: 1px solid #1d1f26; color: #fff; }
.lcd-top strong { font-size: 6px; }
.push { margin-left: auto; }
.bigA { width: 8px; font-size: 8px; text-align: center; }
.chord { width: 20px; color: #4a4f62; font-size: 8px; }
.lcd-bottom { display: flex; align-items: center; gap: 6px; height: 11px; padding: 0 2px 0 10px; font-size: 6px; color: #c9ccd6; white-space: nowrap; }
.lcd-bottom svg { margin-left: auto; }
.beat { display: flex; align-items: center; gap: 1px; }
.beat i { width: 5px; height: 5px; border-radius: 50%; background: #ffab4d; }
.sym, .bpm { font-family: "Open Sans", "DejaVu Sans", sans-serif; }
.mid-tools { display: flex; gap: 3px; margin-left: 3px; }
.group > .speed { width: 30px; gap: 2px; }
.group > .narrow { width: 9px; }
.speed span, .tune span { color: #888da3; }
.group > .tune { width: 22px; gap: 2px; }
.right-tools { display: flex; gap: 3px; margin-left: auto; padding-right: 3px; }
.right-tools .group > button { width: 16px; }
.right-tools .tool { width: 17px; }
.right-tools .group > .disabled { background: #363a4b; color: #5c6278; }

.doctabs { display: grid; grid-template-columns: 1fr 1fr 1fr 12px; gap: 1px; border-top: 1px solid #22242d; background: #22242d; }
.doctabs button { position: relative; background: #50576f; color: #dcdfe8; }
.doctabs .active { background: #8190b7; color: #fff; font-weight: 600; }
.doctabs i { position: absolute; right: 4px; width: 3px; height: 3px; border-radius: 50%; background: #fff; }
.doctabs .add svg { width: 6px; height: 6px; }

.work { display: grid; grid-template-columns: 115px 1fr 4px 124px; min-height: 0; }
.palette { padding: 5px 4px 0; background: #282a34; overflow: hidden; }
.voices { display: flex; gap: 2px; justify-content: center; margin-bottom: 3px; }
.voice, .voices .tool { height: 12px; }
.group.voice > button { width: 12px; height: 12px; font-weight: 700; }
.group.voice > .current { background: #ffb153; color: #fff; }
.voices .tool { width: 12px; }
.words { display: flex; gap: 3px; justify-content: center; margin-bottom: 6px; }
.words .tool { width: 31px; height: 12px; gap: 2px; }
.symbols { display: grid; grid-template-columns: repeat(8, 1fr); border-top: 1px solid #566078; padding-top: 3px; }
.symbols button { color: #636a88; font: italic bold 7px/6px "Liberation Serif", serif; white-space: pre; border-radius: 2px; }
.symbols button.stacked { font-size: 6px; line-height: 5px; font-weight: 400; text-align: center; }
.symbols button.on { color: #e6e8ee; }
.symbols button.sel { background: #568fff; color: #fff; }
.symbols svg { width: 12px; height: 11px; }
.bars { height: 33px; padding-bottom: 3px; }
.notes { height: 73px; grid-template-rows: repeat(5, 1fr); padding-bottom: 2px; }
.effects { height: 99px; grid-template-rows: repeat(7, 1fr); padding-bottom: 3px; }
.marks { height: 33px; padding-bottom: 3px; }
.marks button { font-style: normal; font-size: 6px; }
.autom { height: 17px; }
.symbols .hair { grid-column: span 2; }
.symbols .hair svg { width: 20px; height: 8px; fill: none; stroke: currentColor; }

.canvas { padding: 0 20px 0 23px; background: #454853; min-width: 0; }
.sheet { height: 100%; padding: 25px 0 0; background: #f5f5f5; overflow: hidden; }
.score { width: 110px; height: 130px; }
.serif { font-family: "Liberation Serif", serif; }
.sans { font-family: "Open Sans", sans-serif; }
.tab { font-family: "Liberation Sans", sans-serif; }
.vscroll { background: #14151b; }
.vscroll i { display: block; height: 60%; background: #8fa2b8; }

.inspector { padding: 1px 4px 0; background: #282a34; overflow: hidden; }
.insp-tabs { display: flex; margin: 0 -4px; }
.insp-tabs button { flex: 1; height: 12px; background: #4d536a; font-weight: 500; }
.insp-tabs .active { background: #568fff; color: #fff; }
h2 { margin: 5px 0 3px; font-size: 8px; line-height: 11px; font-weight: 500; color: #eceef2; }
.info { display: flex; gap: 1px; height: 12px; border-radius: 3px; overflow: hidden; padding: 1px; background: #4d536a; }
.info button { width: 11px; }
.swatch { width: 7px; height: 7px; border-radius: 1px; background: #ee7777; }
.info input { flex: 1; padding-left: 3px; background: #0c0d12; color: #d5d7de; }
.info input:nth-of-type(1) { flex: 2; }
.second { margin-top: 13px; }
.field { display: flex; align-items: center; gap: 4px; }
.lbl { width: 30px; text-align: right; color: #bcbec8; }
.field .blue > button { width: 12px; }
.staffkind { margin-left: auto; }
.field .staffkind > button { width: 12px; }
.tuning { margin-top: 3px; }
.tuning .group { flex: 1; height: 12px; }
.tuning .group > * { height: 12px; }
.group > .strings { flex: 1; justify-content: flex-start; gap: 3px; padding-left: 2px; }
.group > .go { width: 12px; color: #fff; }
.more { width: 39px; margin: 3px 0 0 auto; color: #c9ccd6; }
.more svg { width: 8px; height: 8px; }
.sound { margin: 12px 0 3px; }
.source { display: flex; gap: 3px; }
.source .group { margin-right: auto; }
.source .group > button { width: 25px; }
.source .tool { width: 11px; }
.source b { height: 6px; padding: 0 3px; border-radius: 1px; background: #e9edf8; color: #568fff; font-size: 5px; line-height: 6px; }
.source .midi { color: #3a3f52; }
.source .auto { font-weight: 800; font-size: 8px; color: #fff; }
.bank { display: grid; grid-template-columns: 1fr 12px; grid-template-rows: 12px 11px; gap: 1px; margin-top: 4px; border-radius: 3px; overflow: hidden; }
.bank > * { background: #4d536a; }
.bank-name { display: flex; align-items: center; }
.bank-name select { flex: 1; padding-left: 5px; color: #e8eaf0; }
.bank-name button { width: 12px; height: 12px; margin-left: 2px; border-left: 1px solid #282a34; }
.bank-listen { grid-row: span 2; height: 24px; }
.bank-chain { display: flex; align-items: center; gap: 2px; padding: 0 5px; }
.bank-chain em { font-style: normal; font-size: 5px; }
.bank-chain b { padding: 0 1px; border-radius: 1px; background: #dfe2ea; color: #4d536a; font-size: 4px; line-height: 4px; }
.bank-chain .last { width: 7px; height: 6px; margin-left: auto; }
.perf { margin: 13px 0 2px; }
.prow { display: flex; align-items: center; gap: 3px; height: 12px; }
.slim { height: 11px; }
.prow label { width: 44px; text-align: right; color: #bcbec8; }
.prow > span { color: #c9ccd6; }
.pick { display: flex; align-items: center; width: 59px; height: 11px; padding: 0 2px 0 5px; border-radius: 3px; background: #4d536a; }
.pick select { flex: 1; }
.range { appearance: none; flex: 1; height: 6px; background: linear-gradient(90deg, #568fff var(--v), #14151b var(--v)) center / 100% 2px no-repeat; }
.range::-webkit-slider-thumb { appearance: none; width: 6px; height: 6px; border-radius: 50%; background: #fff; }
.switch { appearance: none; display: flex; align-items: center; width: 15px; height: 8px; padding: 0 2px; border-radius: 4px; background: #4d536a; }
.switch::before { content: ""; width: 4px; height: 4px; border-radius: 50%; background: #fff; }
.switch:checked { background: #568fff; }
.switch:checked::before { margin-left: auto; }

.mixer { display: grid; grid-template-rows: 12px 12px 11px; background: #1c1d23; }
.mrow { display: grid; grid-template-columns: 20px 96px 28px 67px 11px 20px 7px 21px 13px 1fr; align-items: center; justify-items: center; white-space: nowrap; }
.mhead { color: #aeb1bd; }
.mhead button { color: #fff; }
.mname { display: flex; align-items: center; justify-self: stretch; gap: 1px; padding-left: 6px; }
.track .mname { padding-left: 1px; color: #f1f2f5; font-weight: 600; }
.num { color: #8d90a0; font-weight: 400; }
.track { border-left: 2px solid #ef6f6f; background: #3f414f; }
.track.mrow { grid-template-columns: 18px 96px 28px 67px 11px 20px 7px 21px 13px 1fr; }
.timeline { justify-self: stretch; align-self: stretch; background: #2a2b35; }
.eye { margin-left: auto; margin-right: 3px; color: #fff; }
.fold { display: flex; margin-left: auto; color: #3b3e4b; }
.ms { display: flex; gap: 3px; color: #4f6474; }
.mixer b { color: #14151b; font-size: 7px; }
.mixer .master b { color: #3a3c46; }
.knob { color: #8b95c4; }
.eq { color: #5d6c7c; }
.eqh { font-size: 5px; }
.marker { position: relative; color: #4d8dff; padding-top: 2px; }
.marker::before { content: ""; position: absolute; left: 0; top: 0; width: 4px; height: 2px; background: #4d8dff; }
.block { width: 9px; height: 9px; background: #0e0f14; }
.fader { appearance: none; width: 64px; height: 9px; background: linear-gradient(#0b0c10, #0b0c10) center / 100% 5px no-repeat; }
.fader::-webkit-slider-thumb { appearance: none; width: 3px; height: 9px; background: #e5e5e8; }

.taskbar { display: grid; grid-template-columns: 201px 1fr auto; align-items: center; border-top: 1px solid #33353c; background: linear-gradient(90deg, #2b2714, #262a1e 18%, #24282b 30%, #292a2b 50%, #1b2c2c 72%, #2c2915 82%, #26271c 92%, #242420); color: #fff; }
.weather { display: flex; align-items: center; gap: 2px; padding-left: 8px; color: #e4e4e0; }
.weather svg { width: 15px; height: 15px; }
.apps { display: flex; align-items: center; }
.apps button { position: relative; width: 22px; height: 20px; }
.apps button svg { width: 12px; height: 12px; }
.apps .start { width: 13px; margin-right: 6px; }
.find { display: flex; align-items: center; width: 109px; height: 16px; margin-right: 1px; padding: 0 1px 0 5px; gap: 4px; border-radius: 8px; background: #404346; }
.find input { flex: 1; font-size: 7px; }
.find input::placeholder { color: #d8d8d8; opacity: 1; }
.find .art { width: 28px; height: 14px; }
.run::after { content: ""; position: absolute; bottom: 0; width: 3px; height: 1px; background: #a5a8aa; }
.apps .current { border-radius: 3px; background: #353b3d; }
.current.run::after { width: 8px; background: #4cc2ff; }
.tray { display: flex; align-items: center; gap: 7px; padding-right: 9px; color: #f0f0f0; }
.tray span { width: 12px; font-size: 8px; text-align: center; }
.micro { color: #58b8c4; }
.status { display: flex; gap: 3px; }
time { width: 33px; text-align: right; }
</style>
